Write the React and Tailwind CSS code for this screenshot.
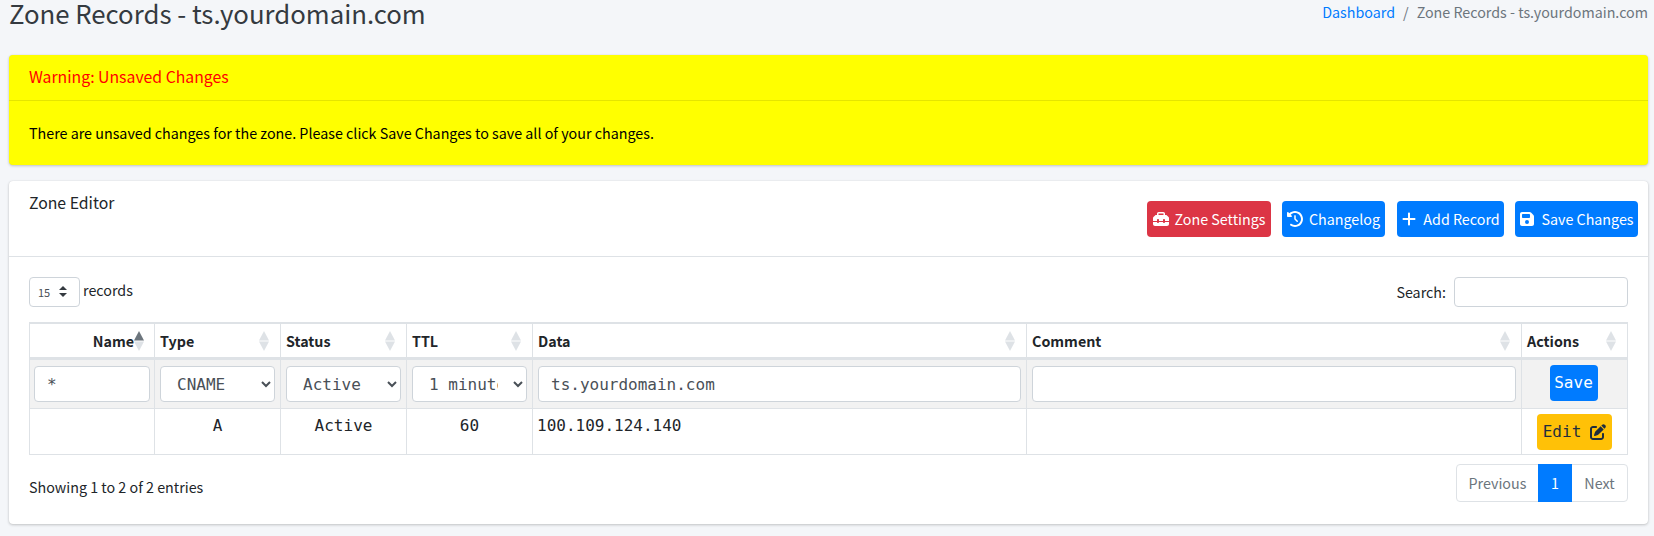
import React from "react";
import { FaToolbox, FaClockRotateLeft, FaPlus, FaFloppyDisk, FaPenToSquare } from "react-icons/fa6";

const SortIcon = ({ active }) => (
  <svg width="10" height="20" viewBox="0 0 10 20" className="shrink-0">
    <path d="M5 0 L10 9.500 L0 9.500 Z" fill={active ? "#6c757d" : "#dee2e6"} />
    <path d="M5 20 L10 10.500 L0 10.500 Z" fill="#dee2e6" />
  </svg>
);

const HeadCell = ({ children }) => (
  <th className="border border-[#dee2e6] border-t-2 border-b-[3px] p-0 font-bold text-[#212529]">
    <div className="flex h-[33px] items-center justify-between pl-[5px] pr-[11px]">
      {children}
      <SortIcon />
    </div>
  </th>
);

const PrimaryBtn = ({ icon, label, className }) => (
  <button className={"flex h-9 items-center justify-center gap-[6px] whitespace-nowrap rounded-[4px] text-white " + className}>
    {icon}
    {label}
  </button>
);

const fieldCls =
  "h-9 w-full rounded-[4px] border border-[#ced4da] bg-white px-3 font-['DejaVu_Sans_Mono',monospace] text-base text-[#495057]";

export default function App() {
  return (
    <div className="h-[536px] overflow-hidden bg-[#f4f6f9] pl-[9px] pr-[6px] font-['Noto_Sans_CJK_SC',sans-serif] text-[14.300px] leading-6 text-[#212529]">
      <div className="flex h-[55px] items-start justify-between">
        <h1 className="text-[25.750px] leading-[26px] text-[#343a40]">Zone Records - ts.yourdomain.com</h1>
        <div className="flex gap-2 leading-[23px]">
          <span className="text-[#007bff]">Dashboard</span>
          <span className="text-[#6c757d]">/</span>
          <span className="text-[#6c757d]">Zone Records - ts.yourdomain.com</span>
        </div>
      </div>

      <div className="h-[110px] rounded-[4px] bg-[#ffff00] shadow-[0_0_1px_rgba(0,0,0,0.125),0_1px_3px_rgba(0,0,0,0.2)]">
        <div className="flex h-[46px] items-center border-b border-black/10 px-5 pb-[2px] text-[15.800px] text-[#ff0000]">
          Warning: Unsaved Changes
        </div>
        <div className="flex h-16 items-center px-5 text-black">
          There are unsaved changes for the zone. Please click Save Changes to save all of your changes.
        </div>
      </div>

      <div className="mt-4 h-[343px] rounded-[4px] bg-white shadow-[0_0_1px_rgba(0,0,0,0.125),0_1px_3px_rgba(0,0,0,0.2)]">
        <div className="flex h-[76px] justify-between border-b border-[#dee2e6] pl-5 pr-[10px]">
          <div className="pt-[10px] text-[15.800px] leading-6">Zone Editor</div>
          <div className="flex gap-[11px] pt-5">
            <PrimaryBtn className="w-[124px] bg-[#dc3545]" icon={<FaToolbox size={16} />} label="Zone Settings" />
            <PrimaryBtn className="w-[103px] bg-[#007bff]" icon={<FaClockRotateLeft size={16} />} label="Changelog" />
            <PrimaryBtn className="ml-px w-[107px] bg-[#007bff]" icon={<FaPlus size={16} />} label="Add Record" />
            <PrimaryBtn className="w-[123px] bg-[#007bff]" icon={<FaFloppyDisk size={16} />} label="Save Changes" />
          </div>
        </div>

        <div className="px-5 pt-5">
          <div className="flex h-[30px] items-center justify-between">
            <div className="flex items-center gap-[3px]">
              <div className="relative h-[30px] w-[51px]">
                <select className="h-full w-full appearance-none rounded-[4px] border border-[#ced4da] bg-white pl-2 text-[11px] text-[#495057]">
                  <option>15</option>
                </select>
                <svg width="8" height="11" viewBox="0 0 8 11" className="absolute left-[30px] top-[9px]">
                  <path d="M4 0 L8 4 L0 4 Z M4 11 L8 7 L0 7 Z" fill="#343a40" />
                </svg>
              </div>
              <span className="-mt-[4px]">records</span>
            </div>
            <div className="flex items-center gap-2">
              <span>Search:</span>
              <input className="h-[30px] w-[174px] rounded-[4px] border border-[#ced4da] bg-white" />
            </div>
          </div>

          <table className="mt-[15px] w-[1598px] table-fixed border-collapse text-left">
            <colgroup>
              <col className="w-[125px]" />
              <col className="w-[126px]" />
              <col className="w-[126px]" />
              <col className="w-[126px]" />
              <col className="w-[494px]" />
              <col className="w-[495px]" />
              <col className="w-[106px]" />
            </colgroup>
            <thead>
              <tr>
                <th className="border border-[#dee2e6] border-t-2 border-b-[3px] p-0 font-bold">
                  <div className="flex h-[33px] items-center justify-end pr-[10px]">
                    Name
                    <SortIcon active />
                  </div>
                </th>
                <HeadCell>Type</HeadCell>
                <HeadCell>Status</HeadCell>
                <HeadCell>TTL</HeadCell>
                <HeadCell>Data</HeadCell>
                <HeadCell>Comment</HeadCell>
                <HeadCell>Actions</HeadCell>
              </tr>
            </thead>
            <tbody>
              <tr className="h-[50px] bg-[#f2f2f2]">
                <td className="border border-[#dee2e6] px-[4px]">
                  <input defaultValue="*" className={fieldCls} />
                </td>
                <td className="border border-[#dee2e6] px-[5px]">
                  <select className={fieldCls}>
                    <option>CNAME</option>
                  </select>
                </td>
                <td className="border border-[#dee2e6] px-[5px]">
                  <select className={fieldCls}>
                    <option>Active</option>
                  </select>
                </td>
                <td className="border border-[#dee2e6] px-[5px]">
                  <select className={fieldCls}>
                    <option>1 minute</option>
                  </select>
                </td>
                <td className="border border-[#dee2e6] px-[5px]">
                  <input defaultValue="ts.yourdomain.com" className={fieldCls} />
                </td>
                <td className="border border-[#dee2e6] px-[5px]">
                  <input className={fieldCls} />
                </td>
                <td className="border border-[#dee2e6] pb-[2px] pr-[2px] text-center">
                  <button className="h-9 w-[48px] rounded-[4px] bg-[#007bff] font-['DejaVu_Sans_Mono',monospace] text-base text-white">Save</button>
                </td>
              </tr>
              <tr className="h-[46px] font-['DejaVu_Sans_Mono',monospace] text-base">
                <td className="border border-[#dee2e6]"></td>
                <td className="border border-[#dee2e6] pb-[11px] text-center">A</td>
                <td className="border border-[#dee2e6] pb-[11px] text-center">Active</td>
                <td className="border border-[#dee2e6] pb-[11px] text-center">60</td>
                <td className="border border-[#dee2e6] px-[4px] pb-[11px]">100.109.124.140</td>
                <td className="border border-[#dee2e6]"></td>
                <td className="border border-[#dee2e6] text-center">
                  <button className="mx-auto flex h-9 w-[75px] items-center justify-center gap-[9px] rounded-[4px] bg-[#ffc107] text-[#1f2d3d]">
                    Edit
                    <FaPenToSquare size={16} />
                  </button>
                </td>
              </tr>
            </tbody>
          </table>

          <div className="mt-[9px] flex items-start justify-between">
            <div className="pt-[11px]">Showing 1 to 2 of 2 entries</div>
            <div className="flex h-[38px] w-[172px] rounded-[4px] border border-[#dee2e6] text-[#6c757d]">
              <span className="flex w-[81px] items-center justify-center">Previous</span>
              <span className="-my-px flex w-[34px] items-center justify-center bg-[#007bff] text-white">1</span>
              <span className="flex flex-1 items-center justify-center">Next</span>
            </div>
          </div>
        </div>
      </div>
    </div>
  );
}
